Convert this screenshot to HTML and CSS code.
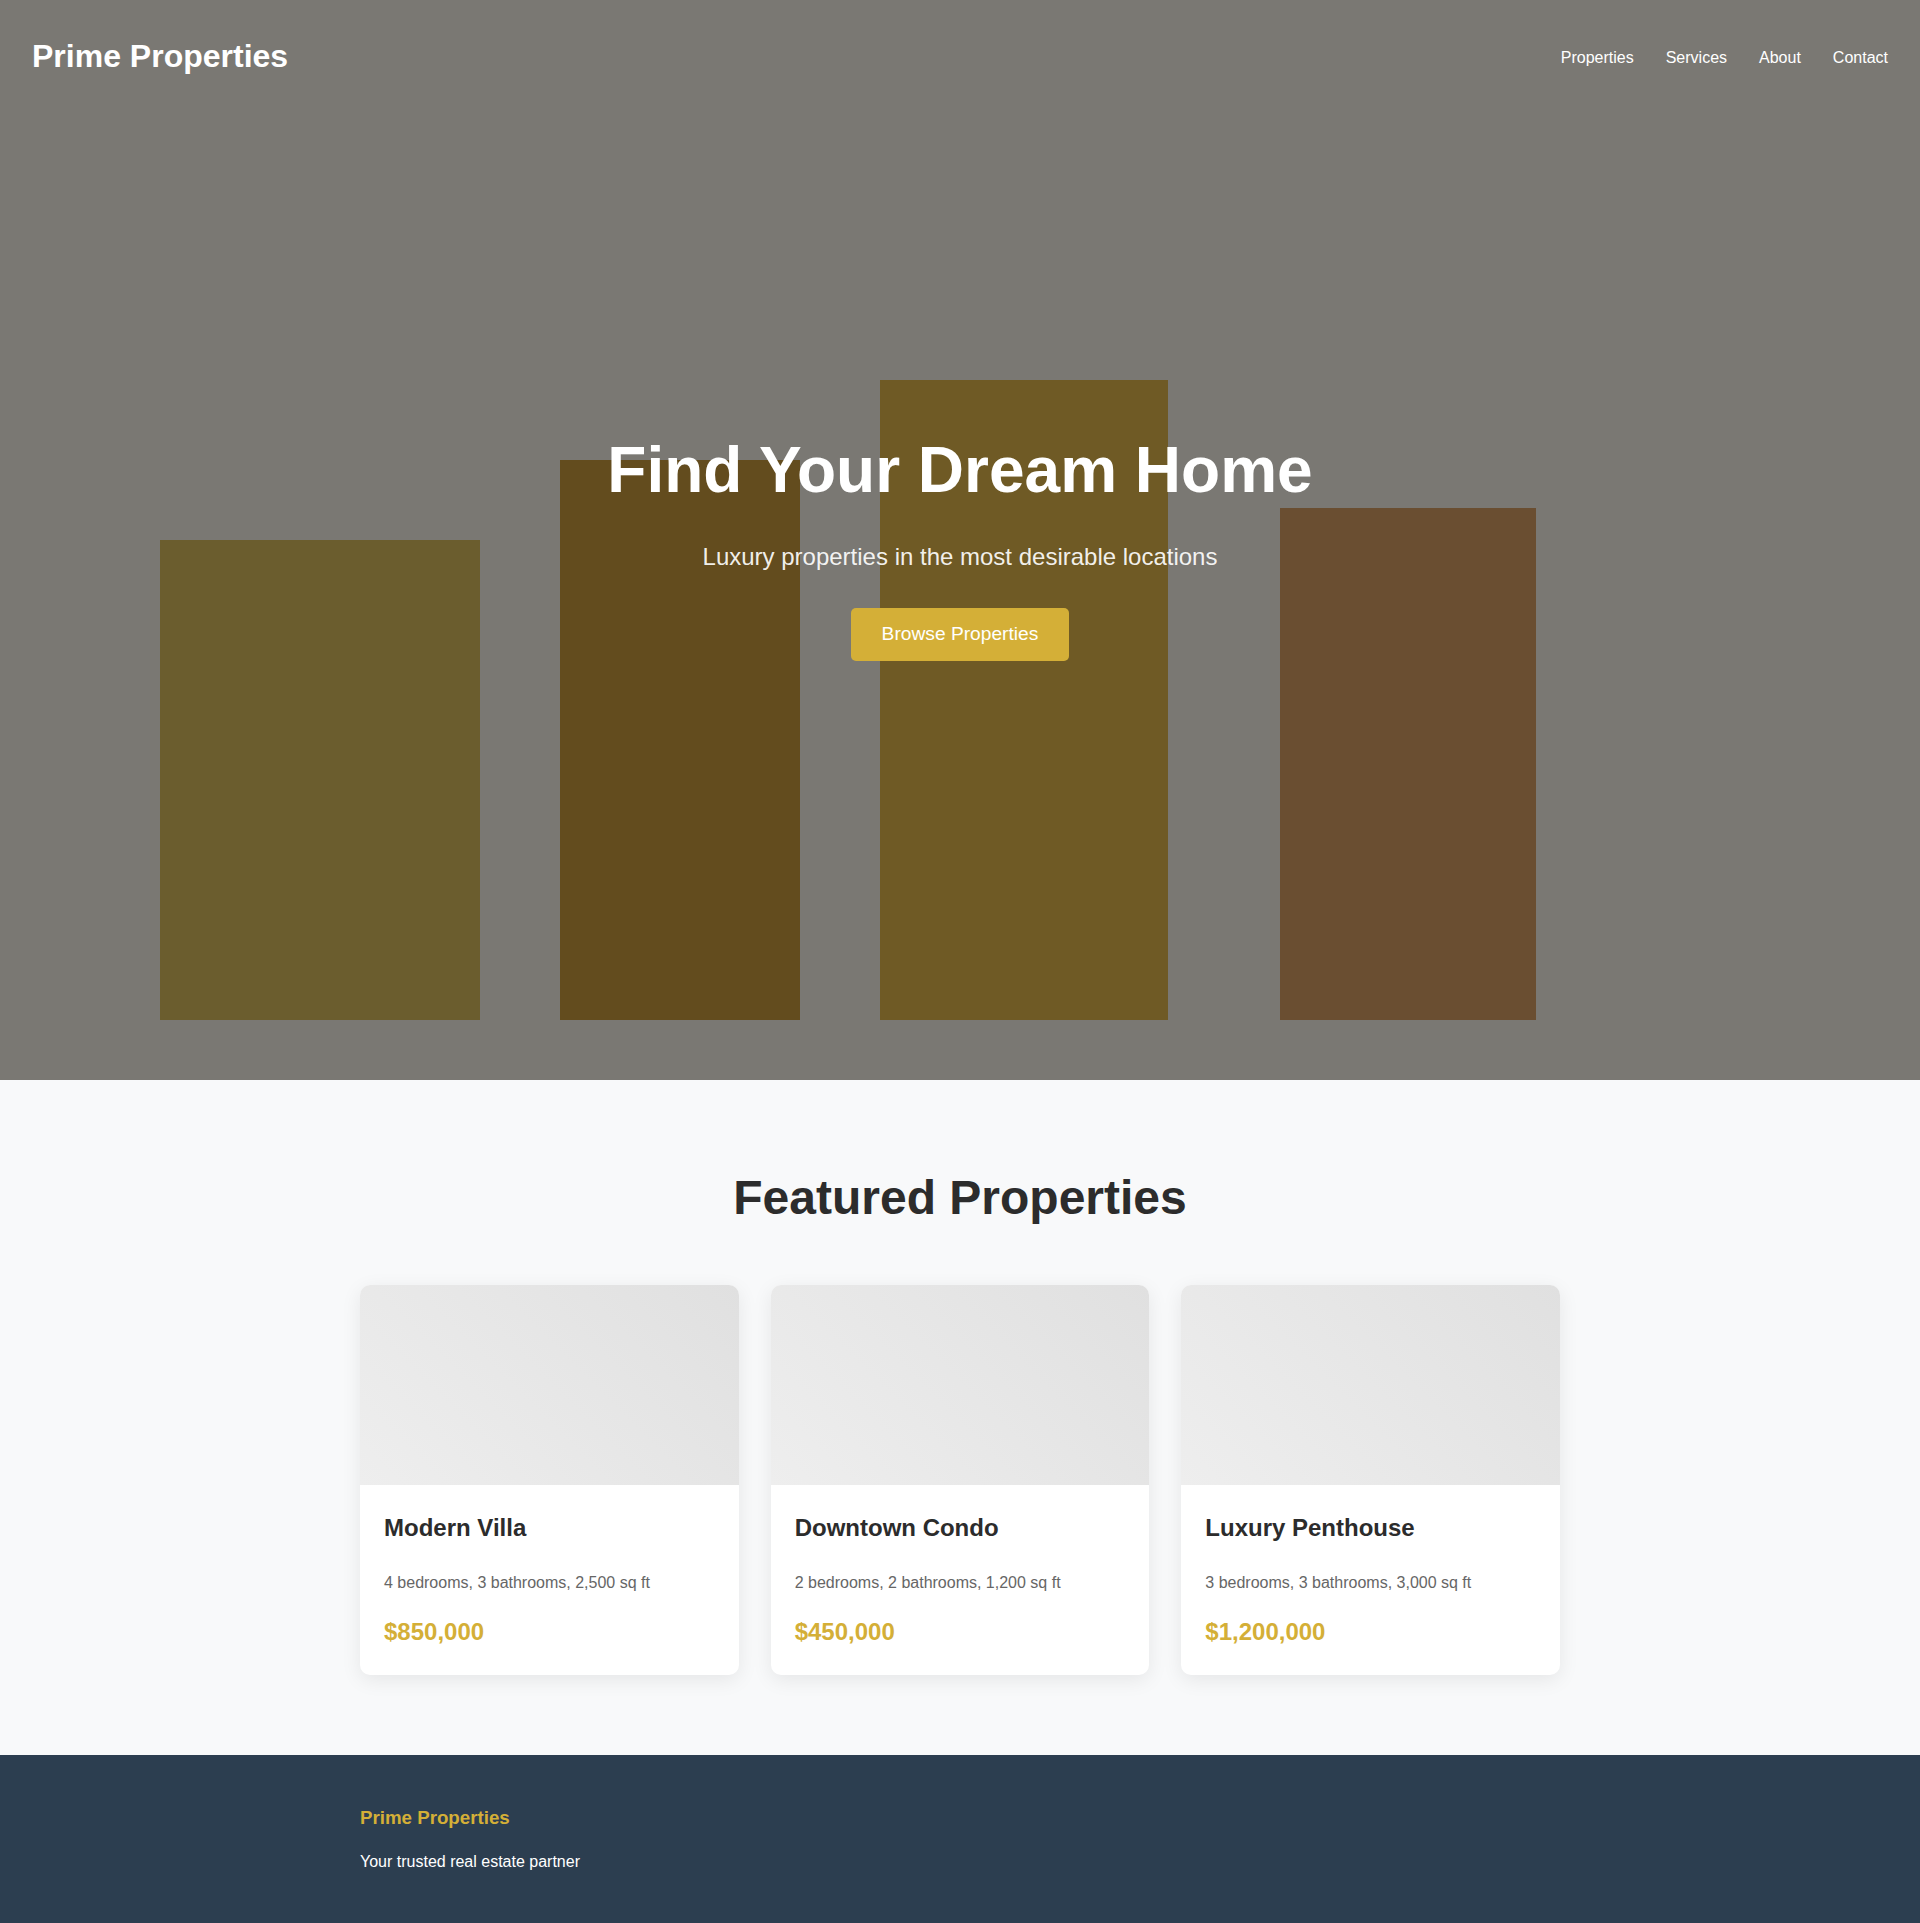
FILE: index.html
```html
<!DOCTYPE html>
<html lang="en">
<head>
<meta charset="UTF-8">
<title>Prime Properties</title>
<link rel="stylesheet" href="styles.css">
</head>
<body>
<header class="site-header">
  <div class="logo">Prime Properties</div>
  <nav>
    <ul class="nav-links">
      <li><a href="#">Properties</a></li>
      <li><a href="#">Services</a></li>
      <li><a href="#">About</a></li>
      <li><a href="#">Contact</a></li>
    </ul>
  </nav>
</header>

<section class="hero">
  <svg class="hero-bg" viewBox="0 0 1920 1080" preserveAspectRatio="xMidYMid slice" aria-hidden="true">
    <rect x="0" y="0" width="1920" height="1080" fill="#7a7873"/>
    <rect x="160" y="540" width="320" height="480" fill="#6b5d2e"/>
    <rect x="560" y="460" width="240" height="560" fill="#634c1e"/>
    <rect x="880" y="380" width="288" height="640" fill="#6f5a25"/>
    <rect x="1280" y="508" width="256" height="512" fill="#6a4e31"/>
  </svg>
  <div class="hero-content">
    <h1>Find Your Dream Home</h1>
    <p>Luxury properties in the most desirable locations</p>
    <button class="btn">Browse Properties</button>
  </div>
</section>

<section class="featured">
  <div class="container">
    <h2>Featured Properties</h2>
    <div class="grid">
      <div class="card">
        <div class="card-img"></div>
        <div class="card-body">
          <h3>Modern Villa</h3>
          <p>4 bedrooms, 3 bathrooms, 2,500 sq ft</p>
          <div class="price">$850,000</div>
        </div>
      </div>
      <div class="card">
        <div class="card-img"></div>
        <div class="card-body">
          <h3>Downtown Condo</h3>
          <p>2 bedrooms, 2 bathrooms, 1,200 sq ft</p>
          <div class="price">$450,000</div>
        </div>
      </div>
      <div class="card">
        <div class="card-img"></div>
        <div class="card-body">
          <h3>Luxury Penthouse</h3>
          <p>3 bedrooms, 3 bathrooms, 3,000 sq ft</p>
          <div class="price">$1,200,000</div>
        </div>
      </div>
    </div>
  </div>
</section>

<footer class="site-footer">
  <div class="container">
    <h3>Prime Properties</h3>
    <p>Your trusted real estate partner</p>
  </div>
</footer>
</body>
</html>
```

FILE: styles.css
```css
* { box-sizing: border-box; }

body {
  margin: 0;
  font-family: "Liberation Sans", Arial, sans-serif;
  line-height: 1.6;
  color: #333;
  background: #f8f9fa;
}

.site-header {
  position: absolute;
  top: 0;
  left: 0;
  right: 0;
  z-index: 10;
  display: flex;
  justify-content: space-between;
  align-items: flex-start;
  padding: 31px 32px 0;
}

.logo {
  font-size: 32px;
  font-weight: 700;
  color: #fff;
}

.nav-links {
  list-style: none;
  display: flex;
  gap: 32px;
  margin: 14px 0 0;
  padding: 0;
}

.nav-links a {
  color: #fff;
  text-decoration: none;
  font-size: 16px;
}

.hero {
  position: relative;
  height: 1080px;
  display: flex;
  align-items: center;
  justify-content: center;
  overflow: hidden;
  background: #7a7873;
}

.hero-bg {
  position: absolute;
  inset: 0;
  width: 100%;
  height: 100%;
  display: block;
}

.hero-content {
  position: relative;
  text-align: center;
  color: #fff;
}

.hero-content h1 {
  font-size: 64px;
  font-weight: 700;
  margin: 0 0 16px;
}

.hero-content p {
  font-size: 24px;
  margin: 0 0 32px;
  color: rgba(255, 255, 255, 0.92);
}

.btn {
  font-family: "Liberation Sans", Arial, sans-serif;
  font-size: 19.2px;
  background: #d4af37;
  color: #fff;
  border: none;
  border-radius: 5px;
  padding: 15.5px 31px;
  cursor: pointer;
}

.featured {
  background: #f8f9fa;
  padding: 80px 0;
}

.container {
  max-width: 1200px;
  margin: 0 auto;
}

.featured h2 {
  text-align: center;
  font-size: 48px;
  font-weight: 700;
  color: #2c2c2c;
  margin: 0 0 48px;
}

.grid {
  display: grid;
  grid-template-columns: repeat(3, 1fr);
  gap: 32px;
}

.card {
  background: #fff;
  border-radius: 10px;
  overflow: hidden;
  box-shadow: 0 5px 20px rgba(0, 0, 0, 0.08);
}

.card-img {
  height: 200px;
  background: linear-gradient(45deg, #eeeeee, #e0e0e0);
}

.card-body {
  padding: 24px;
}

.card-body h3 {
  font-size: 24px;
  font-weight: 700;
  color: #2c2c2c;
  margin: 0 0 23px;
}

.card-body p {
  font-size: 16px;
  color: #666;
  margin: 0 0 17px;
}

.price {
  font-size: 24px;
  font-weight: 700;
  color: #d4af37;
}

.site-footer {
  background: #2c3e50;
  color: #fff;
  padding: 48px 0;
}

.site-footer h3 {
  font-size: 18.72px;
  color: #d4af37;
  margin: 0 0 16px;
}

.site-footer p {
  font-size: 16px;
  margin: 0;
}
```
